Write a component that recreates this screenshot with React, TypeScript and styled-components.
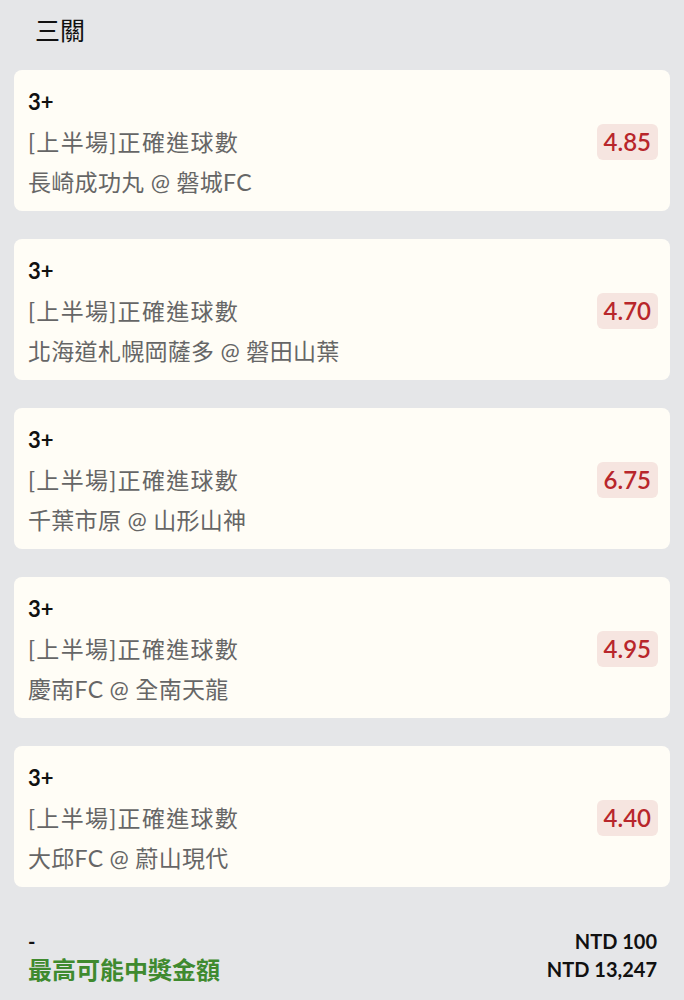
import React from "react";
import styled, { createGlobalStyle } from "styled-components";

const Global = createGlobalStyle`
  html, body { margin: 0; padding: 0; background: #e5e6e8; }
  body { font-family: Lato, "Noto Sans CJK TC", sans-serif; }
`;

const Page = styled.div`
  width: 684px;
  min-height: 1000px;
  background: #e5e6e8;
  box-sizing: border-box;
  padding: 0 14px;
  display: flex;
  flex-direction: column;
`;

const Title = styled.h1`
  margin: 0;
  height: 58px;
  display: flex;
  align-items: center;
  padding-left: 21px;
  font-size: 25px;
  font-weight: 400;
  color: #111;
  font-family: "Noto Sans CJK TC", sans-serif;
`;

const List = styled.div`
  margin-top: 12px;
  display: flex;
  flex-direction: column;
  gap: 28px;
`;

const Card = styled.div`
  background: #fffdf6;
  border-radius: 8px;
  padding: 12px 12px 9px 14px;
  display: flex;
  align-items: center;
  justify-content: space-between;
  height: 141px;
  box-sizing: border-box;
`;

const Info = styled.div`
  display: flex;
  flex-direction: column;
`;

const Pick = styled.div`
  font-family: Lato, sans-serif;
  font-weight: 700;
  font-size: 22px;
  line-height: 40px;
  color: #111;
`;

const Line = styled.div<{ $spread?: boolean }>`
  font-family: Lato, "Noto Sans CJK TC", sans-serif;
  font-size: 23px;
  line-height: 40px;
  color: #666;
  letter-spacing: ${(p) => (p.$spread ? "1.3px" : "0.3px")};
`;

const Odds = styled.div`
  font-family: Lato, sans-serif;
  font-size: 24px;
  font-weight: 600;
  color: #b8262b;
  background: #f6e5e0;
  border-radius: 6px;
  padding: 0 7px;
  height: 36px;
  line-height: 36px;
`;

const Footer = styled.div`
  margin-top: 40px;
  display: grid;
  grid-template-columns: 1fr auto;
  padding: 0 13px 0 14px;
  line-height: 28px;
`;

const Dash = styled.div`
  font-family: Lato, sans-serif;
  font-weight: 700;
  font-size: 20px;
  color: #111;
`;

const Amount = styled.div`
  font-family: Lato, sans-serif;
  font-weight: 700;
  font-size: 20px;
  color: #111;
  text-align: right;
`;

const Label = styled.div`
  font-family: "Noto Sans CJK TC", sans-serif;
  font-weight: 700;
  font-size: 24px;
  color: #3f8a2f;
`;

const bets = [
  { home: "長崎成功丸", away: "磐城FC", odds: "4.85" },
  { home: "北海道札幌岡薩多", away: "磐田山葉", odds: "4.70" },
  { home: "千葉市原", away: "山形山神", odds: "6.75" },
  { home: "慶南FC", away: "全南天龍", odds: "4.95" },
  { home: "大邱FC", away: "蔚山現代", odds: "4.40" },
];

export default function App() {
  return (
    <>
      <Global />
      <Page>
        <Title>三關</Title>
        <List>
          {bets.map((b) => (
            <Card key={b.home}>
              <Info>
                <Pick>3+</Pick>
                <Line $spread>[上半場]正確進球數</Line>
                <Line>
                  {b.home} @ {b.away}
                </Line>
              </Info>
              <Odds>{b.odds}</Odds>
            </Card>
          ))}
        </List>
        <Footer>
          <Dash>-</Dash>
          <Amount>NTD 100</Amount>
          <Label>最高可能中獎金額</Label>
          <Amount>NTD 13,247</Amount>
        </Footer>
      </Page>
    </>
  );
}
